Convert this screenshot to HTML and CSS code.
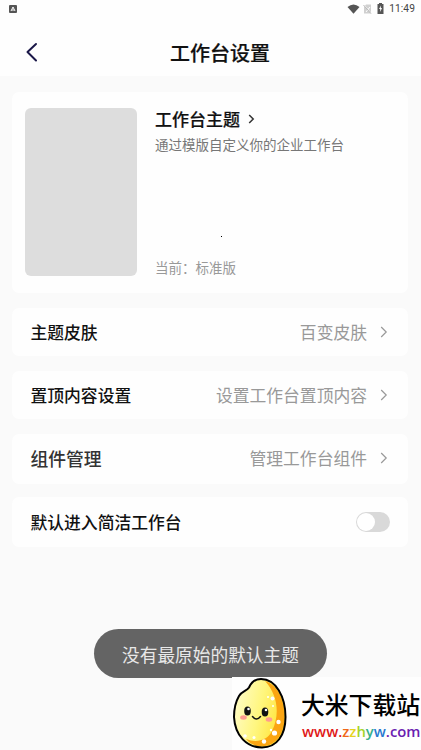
FILE: index.html
```html
<!DOCTYPE html>
<html lang="zh-CN">
<head>
<meta charset="utf-8">
<title>工作台设置</title>
<link rel="stylesheet" href="styles.css">
</head>
<body>
<div class="screen">
  <header class="top">
    <div class="status">
      <svg class="status-app" width="8" height="8" viewBox="0 0 8 8"><rect width="8" height="8" rx="1" fill="#555"/><path d="M2 6 4 2 6 6M3 5h2" fill="none" stroke="#fff" stroke-width="1"/></svg>
      <div class="status-right">
        <svg class="wifi" width="13" height="10" viewBox="0 0 13 10"><path d="M.5 3Q6.500-2 12.500 3L6.500 9.700Z" fill="#555"/></svg>
        <svg class="sim" width="9" height="10" viewBox="0 0 9 10"><path d="M3 .5h5v9H1V3Z" fill="#d0d0d0"/><path d="m1 1 7 8M3 8l4-5" stroke="#fff"/><path d="m.5 1 7.500 8.500" stroke="#aaa" stroke-width=".8"/></svg>
        <svg class="battery" width="7" height="11" viewBox="0 0 7 11"><path d="M2 0h3v1h1.500v10h-6V1H2Z" fill="#555"/><path d="M4 2.500 2 6h1.200v3L5 5H3.800Z" fill="#fff"/></svg>
        <span class="clock">11:49</span>
      </div>
    </div>
    <div class="nav">
      <svg class="back" width="14" height="20" viewBox="0 0 14 20"><path d="M11 2 2.500 10 11 18.500" fill="none" stroke="#1a1748" stroke-width="2" stroke-linecap="round" stroke-linejoin="round"/></svg>
      <h1 class="title">工作台设置</h1>
    </div>
  </header>
  <main class="list">
    <section class="card theme">
      <div class="preview"></div>
      <div class="theme-info">
        <h2 class="theme-title">工作台主题<svg class="theme-arrow" width="7" height="10" viewBox="0 0 7 10"><path d="m1.200 1 4 4-4 4" fill="none" stroke="#333" stroke-width="1.500"/></svg></h2>
        <p class="desc">通过模版自定义你的企业工作台</p>
        <p class="current">当前：标准版</p>
      </div>
      <i class="dot"></i>
    </section>
    <div class="card row"><span class="label">主题皮肤</span><span class="value">百变皮肤</span><svg class="chev" width="8" height="12" viewBox="0 0 8 12"><path d="m1.200 1 5 5-5 5" fill="none" stroke="#999" stroke-width="1.200"/></svg></div>
    <div class="card row"><span class="label">置顶内容设置</span><span class="value">设置工作台置顶内容</span><svg class="chev" width="8" height="12" viewBox="0 0 8 12"><path d="m1.200 1 5 5-5 5" fill="none" stroke="#999" stroke-width="1.200"/></svg></div>
    <div class="card row row-tall"><span class="label label-soft">组件管理</span><span class="value">管理工作台组件</span><svg class="chev" width="8" height="12" viewBox="0 0 8 12"><path d="m1.200 1 5 5-5 5" fill="none" stroke="#999" stroke-width="1.200"/></svg></div>
    <div class="card row row-last"><span class="label">默认进入简洁工作台</span><span class="switch"><i class="knob"></i></span></div>
  </main>
  <div class="toast">没有最原始的默认主题</div>
  <div class="brand">
    <svg class="mascot" width="56" height="73" viewBox="0 0 56 73">
      <defs><linearGradient id="egg" x1="0" y1=".3" x2="1" y2=".6"><stop offset="0" stop-color="#fffcc8"/><stop offset=".5" stop-color="#fff67e"/><stop offset="1" stop-color="#ffe02c"/></linearGradient></defs>
      <path d="M29 2C22 2 19 6 17 10.500 15 14 10 14 7 19 3.500 25 2 32 2 40 3 59 15 70.500 30 70.500 45 70.500 53.500 58 53.500 40 53.500 20 44 2 29 2Z" fill="url(#egg)"/>
      <path d="M33 4C47 8 53 26 52.500 41 52 58 43 69 30 69.500 24 69.500 18 67 14 62 24 66 35 64 40 54 48 38 46 18 33 4Z" fill="#fba512"/>
      <path d="M29 2C22 2 19 6 17 10.500 15 14 10 14 7 19 3.500 25 2 32 2 40 3 59 15 70.500 30 70.500 45 70.500 53.500 58 53.500 40 53.500 20 44 2 29 2Z" fill="none" stroke="#000" stroke-width="2"/>
      <ellipse cx="15.500" cy="34" rx="3.300" ry="4.600" fill="#111"/><ellipse cx="33" cy="35" rx="3.300" ry="4.600" fill="#111"/>
      <circle cx="16.500" cy="32" r="1.300" fill="#fff"/><circle cx="34" cy="33" r="1.300" fill="#fff"/>
      <path d="M20.500 39.500q4 5 8 0" fill="none" stroke="#111" stroke-width="1.500" stroke-linecap="round"/>
      <ellipse cx="11.500" cy="40.500" rx="3.300" ry="2.200" fill="#ff9b91"/><ellipse cx="37" cy="42.500" rx="3.300" ry="2.200" fill="#ff9b91"/>
      <g fill="#fff"><circle cx="40.500" cy="21.500" r="2"/><circle cx="36" cy="20" r="1"/><circle cx="41" cy="29" r="1"/><circle cx="46.500" cy="45" r="2.200"/><circle cx="42.500" cy="56" r="2.600"/><circle cx="39" cy="53" r="1.200"/><circle cx="32" cy="64.500" r="2.200"/><circle cx="22" cy="60.500" r="1.500"/><circle cx="13" cy="59" r="1.800"/></g>
    </svg>
    <div class="brand-text">
      <div class="brand-name">大米下载站</div>
      <div class="brand-url"><span class="c1">www.</span><span class="c2">z</span><span class="c3">z</span><span class="c4">h</span><span class="c5">y</span><span class="c6">w</span><span class="c7">.com</span></div>
    </div>
  </div>
</div>
</body>
</html>
```
FILE: styles.css
```css
* { box-sizing: border-box; }
body { margin: 0; font-family: "Noto Sans CJK SC", sans-serif; }
h1, h2, p { margin: 0; font-weight: 500; }
svg { display: block; flex: none; }
.screen { position: relative; width: 421px; height: 750px; overflow: hidden; background: #fafafa; }
.top { height: 76px; background: #fefefe; }
.status { display: flex; justify-content: space-between; height: 18px; padding: 0 6px 0 9px; align-items: center; }
.status-app { margin-top: -1px; }
.status-right { display: flex; align-items: center; }
.sim { margin-left: 3px; }
.battery { margin-left: 5px; margin-top: -1px; }
.clock { margin-left: 5px; font: 400 10.200px/18px Roboto, sans-serif; color: #444; letter-spacing: .1px; }
.nav { display: flex; align-items: center; height: 58px; padding: 11px 0 0; }
.back { margin-left: 25px; margin-top: -1px; }
.title { flex: 1; margin-right: 39px; padding-left: 19px; text-align: center; font-size: 20px; line-height: 30px; color: #111; -webkit-text-stroke: .2px #111; }
.list { display: flex; flex-direction: column; gap: 15px; padding: 16px 13px 0 12px; }
.card { background: #fefefe; border-radius: 7px; }
.theme { position: relative; display: flex; height: 201px; padding: 16px 13px; }
.preview { width: 112px; height: 168px; background: #ddd; border-radius: 6px; }
.theme-info { display: flex; flex-direction: column; height: 168px; margin-left: 18px; }
.theme-title { display: flex; align-items: center; margin-top: -1px; font-size: 17px; line-height: 24px; color: #111; -webkit-text-stroke: .2px #111; }
.theme-arrow { margin-left: 8px; }
.desc { margin-top: 3px; font-size: 13.500px; line-height: 20px; color: #777; font-weight: 400; }
.current { margin-top: auto; margin-bottom: -1px; font-size: 13.500px; line-height: 20px; color: #999; font-weight: 400; }
.dot { position: absolute; left: 209px; top: 144px; width: 1px; height: 1px; background: #000; }
.row { display: flex; align-items: center; height: 48px; padding: 0 19px; }
.row-tall { height: 50px; padding-bottom: 2px; }
.row-last { height: 50px; margin-top: -2px; }
.label { margin-left: -.5px; font-size: 16.800px; line-height: 24px; font-weight: 500; color: #111; }
.label-soft { font-size: 17.800px; color: #333; }
.value { margin-left: auto; font-size: 16.800px; line-height: 24px; color: #999; }
.chev { margin-left: 13px; margin-right: 1px; }
.switch { width: 34px; height: 20px; margin-left: auto; margin-right: -1px; padding: 1px; border-radius: 10px; background: #d9d9d9; }
.knob { display: block; width: 18px; height: 18px; border-radius: 50%; background: #fff; }
.toast { position: absolute; left: 94px; top: 629px; width: 233px; height: 49px; padding-top: 1px; border-radius: 25px; background: #646464; color: #e8e8e8; font-size: 17.700px; line-height: 49px; text-align: center; white-space: nowrap; }
.brand { position: absolute; left: 232px; top: 677px; width: 189px; height: 73px; display: flex; background: #fefefe; }
.brand-text { margin-left: 13px; padding-top: 10px; white-space: nowrap; }
.brand-name { font-size: 23.800px; line-height: 34px; font-weight: 500; color: #000; }
.brand-url { margin-left: 1px; font: 600 14.800px/20px "Open Sans", sans-serif; }
.c1 { color: #e01818; }
.c2 { color: #f06818; }
.c3 { color: #e6d31e; }
.c4 { color: #a3d52a; }
.c5 { color: #35b08a; }
.c6 { color: #2878d0; }
.c7 { color: #6a20b0; }
```
